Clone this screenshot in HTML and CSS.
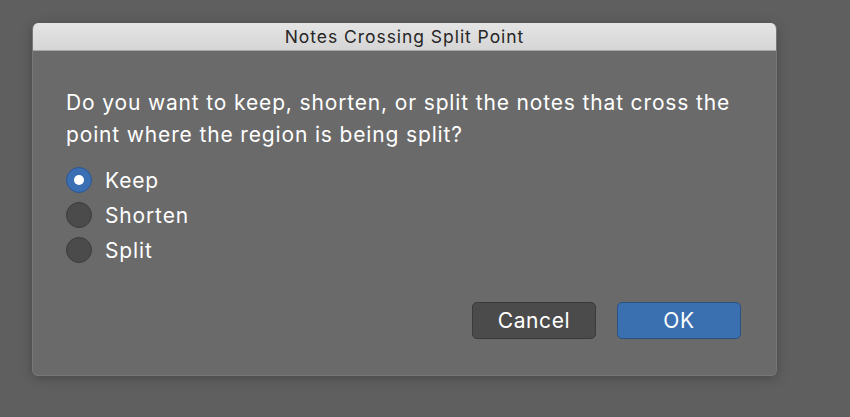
FILE: index.html
```html
<!DOCTYPE html>
<html>
<head>
<meta charset="utf-8">
<link rel="stylesheet" href="styles.css">
</head>
<body>
<div class="stage">
  <div class="dialog">
    <div class="titlebar">Notes Crossing Split Point</div>
    <div class="body">
      <p class="message">Do you want to keep, shorten, or split the notes that cross the point where the region is being split?</p>
      <div class="options">
        <label class="option"><span class="radio checked"></span><span>Keep</span></label>
        <label class="option"><span class="radio"></span><span>Shorten</span></label>
        <label class="option"><span class="radio"></span><span>Split</span></label>
      </div>
      <div class="buttons">
        <button class="btn cancel">Cancel</button>
        <button class="btn ok">OK</button>
      </div>
    </div>
  </div>
</div>
</body>
</html>
```
FILE: styles.css
```css
* { box-sizing: border-box; }
html, body {
  margin: 0;
  padding: 0;
  width: 850px;
  height: 417px;
  background: #5f5f5f;
  overflow: hidden;
  font-family: Inter, "Liberation Sans", Arial, sans-serif;
}
.stage {
  padding: 23px 0 0 32px;
}
.dialog {
  width: 745px;
  height: 353px;
  background: #6a6a6a;
  border-radius: 6px;
  border: 1px solid #777;
  border-top: none;
  box-shadow: 0 2px 12px rgba(0,0,0,0.25);
  overflow: hidden;
  display: flex;
  flex-direction: column;
}
.titlebar {
  height: 28px;
  background: linear-gradient(#e4e4e4, #d6d6d6);
  border-bottom: 1px solid #a8a8a8;
  color: #262626;
  font-size: 17.5px;
  line-height: 28px;
  text-align: center;
  letter-spacing: 0.95px;
}
.body {
  flex: 1;
  padding: 36px 0 0 33px;
  display: flex;
  flex-direction: column;
}
.message {
  margin: 0;
  color: #fff;
  font-size: 21px;
  line-height: 32px;
  width: 700px;
  letter-spacing: 0.85px;
}
.options {
  margin-top: 16px;
  display: flex;
  flex-direction: column;
  gap: 9px;
}
.option {
  display: flex;
  align-items: center;
  gap: 13px;
  color: #fff;
  font-size: 21px;
  letter-spacing: 0.85px;
  height: 26px;
}
.radio {
  width: 26px;
  height: 26px;
  border-radius: 50%;
  background: #4b4b4b;
  border: 1px solid #3c3c3c;
  display: flex;
  align-items: center;
  justify-content: center;
}
.radio.checked {
  background: #3a6fb3;
  border-color: #2c5690;
}
.radio.checked::after {
  content: "";
  width: 10px;
  height: 10px;
  border-radius: 50%;
  background: #fff;
}
.buttons {
  margin-top: 39px;
  padding-left: 406px;
  display: flex;
  gap: 21px;
}
.btn {
  width: 124px;
  height: 37px;
  border-radius: 5px;
  color: #fff;
  font-family: Inter, "Liberation Sans", Arial, sans-serif;
  font-size: 21px;
  letter-spacing: 0.6px;
  padding: 0;
}
.cancel {
  background: #4b4b4b;
  border: 1px solid #3a3a3a;
}
.ok {
  background: #3a6fb0;
  border: 1px solid #2a5283;
}
```
